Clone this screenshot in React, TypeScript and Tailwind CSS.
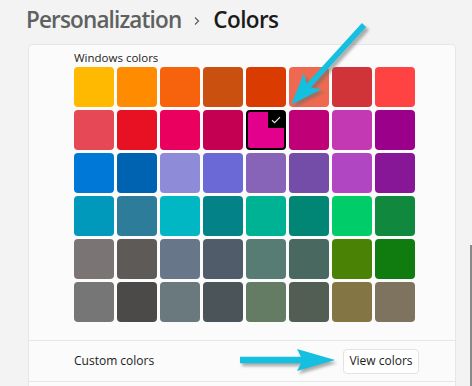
import React from 'react';

const palette: string[][] = [
  ['#FFB900', '#FF8C00', '#F7630C', '#CA5010', '#DA3B01', '#EF6950', '#D13438', '#FF4343'],
  ['#E74856', '#E81123', '#EA005E', '#C30052', '#E3008C', '#BF0077', '#C239B3', '#9A0089'],
  ['#0078D7', '#0063B1', '#8E8CD8', '#6B69D6', '#8764B8', '#744DA9', '#B146C2', '#881798'],
  ['#0099BC', '#2D7D9A', '#00B7C3', '#038387', '#00B294', '#018574', '#00CC6A', '#10893E'],
  ['#7A7574', '#5D5A58', '#68768A', '#515C6B', '#567C73', '#486860', '#498205', '#107C10'],
  ['#767676', '#4C4A48', '#69797E', '#4A5459', '#647C64', '#525E54', '#847545', '#7E735F'],
];

const SELECTED = '#E3008C';

function Swatch({ color }: { color: string }) {
  const selected = color === SELECTED;
  if (!selected) {
    return <div className="w-[40px] h-[40px] rounded-[4px]" style={{ backgroundColor: color }} />;
  }
  return (
    <div
      className="relative w-[40px] h-[40px] rounded-[4px] border-2 border-black"
      style={{ backgroundColor: color }}
    >
      <div className="absolute top-0 right-0 w-[16px] h-[16px] bg-black flex items-center justify-center">
        <svg width="10" height="8" viewBox="0 0 10 8" fill="none">
          <path d="M1 4.2 L3.6 6.6 L9 1.2" stroke="#e6e6e6" strokeWidth="1.2" />
        </svg>
      </div>
    </div>
  );
}

// arrow shape laid along +x, tail at origin
function arrowPoints(len: number, head: number, half: number, shaft: number, notch: number) {
  const pts = [
    [0, -shaft],
    [len - head + notch, -shaft],
    [len - head, -half],
    [len, 0],
    [len - head, half],
    [len - head + notch, shaft],
    [0, shaft],
  ];
  return pts.map((p) => p.join(',')).join(' ');
}

function Arrows() {
  const cyan = '#14bfdf';
  const diag = arrowPoints(108, 32, 12, 2.8, 6);
  const flat = arrowPoints(95, 38, 11, 3.2, 4);
  return (
    <svg className="absolute inset-0 pointer-events-none" width="472" height="386">
      <defs>
        <filter id="blur" x="-20%" y="-20%" width="140%" height="140%">
          <feGaussianBlur stdDeviation="1.6" />
        </filter>
      </defs>
      {/* top arrow pointing at the selected swatch */}
      <g transform="translate(367,28) rotate(132.4)">
        <polygon points={diag} fill="#6b6b6b" opacity="0.55" filter="url(#blur)" />
      </g>
      <g transform="translate(364,25) rotate(132.4)">
        <polygon points={diag} fill={cyan} />
      </g>
      {/* bottom arrow pointing at View colors */}
      <g transform="translate(242,363)">
        <polygon points={flat} fill="#6b6b6b" opacity="0.55" filter="url(#blur)" />
      </g>
      <g transform="translate(240,360)">
        <polygon points={flat} fill={cyan} />
      </g>
    </svg>
  );
}

export default function App() {
  return (
    <div
      className="relative w-[472px] h-[386px] overflow-hidden bg-[#f3f3f3]"
      style={{ fontFamily: '"Open Sans", "Noto Sans", sans-serif' }}
    >
      {/* breadcrumb header */}
      <div className="h-[44px] pl-[26px] flex items-center gap-[12px] pb-[4px]">
        <span className="text-[22.5px] font-semibold text-[#5e615f] tracking-[-0.85px]">Personalization</span>
        <svg width="8" height="10" viewBox="0 0 8 10" className="mt-[2px]">
          <path d="M2 1.5 L5.5 5 L2 8.5" stroke="#5e615f" strokeWidth="1.3" fill="none" />
        </svg>
        <span className="text-[22.5px] font-semibold text-[#1b1b1b] tracking-[-0.6px]">Colors</span>
      </div>

      {/* settings card */}
      <div className="ml-[28px] w-[428px] border border-[#e6e6e6] bg-[#fbfbfb] rounded-t-[4px]">
        <div className="pl-[45px] pt-[5px] pb-[18px] border-b border-[#e6e6e6]">
          <div className="text-[11.5px] text-[#1b1b1b] leading-[16px] mb-[1px]">Windows colors</div>
          <div className="grid grid-cols-[repeat(8,40px)] gap-[3px]">
            {palette.flat().map((c) => (
              <Swatch key={c} color={c} />
            ))}
          </div>
        </div>
        <div className="h-[41px] pl-[45px] pr-[36px] flex items-center justify-between border-b border-[#e6e6e6]">
          <span className="text-[12px] text-[#1b1b1b]">Custom colors</span>
          <button className="h-[25px] w-[76px] rounded-[4px] border border-[#e3e3e3] bg-white text-[12px] text-[#1b1b1b]">
            View colors
          </button>
        </div>
        <div className="h-[20px]" />
      </div>

      {/* scrollbar thumb */}
      <div className="absolute left-[470px] top-[245px] w-[1.5px] h-[141px] bg-[#8a8a8a]" />

      <Arrows />
    </div>
  );
}
